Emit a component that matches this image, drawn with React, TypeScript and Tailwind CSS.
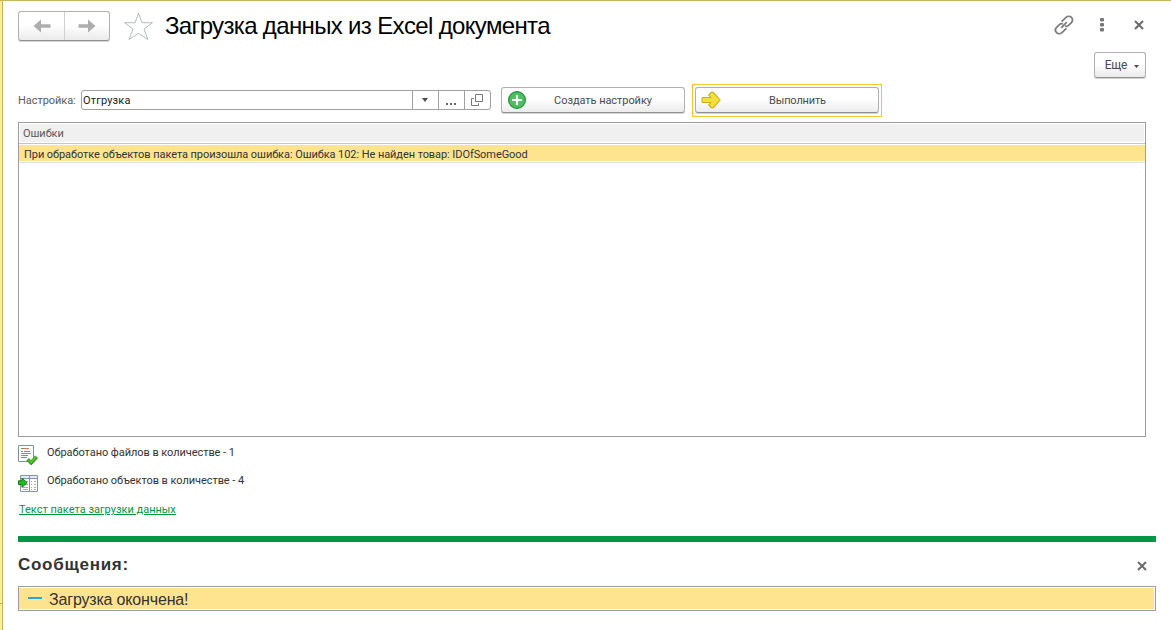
import React from "react";

function Cross() {
  return (
    <svg width="10" height="10" viewBox="0 0 10 10" className="block">
      <path d="M1 1L9 9M9 1L1 9" stroke="#6b6b6b" strokeWidth="2" fill="none" />
    </svg>
  );
}

function NavArrow({ right = false }: { right?: boolean }) {
  return (
    <svg width="18" height="14" viewBox="0 0 18 14" className={right ? "block -scale-x-100" : "block"}>
      <path d="M0.5 7L8 0.6V5.2H17.5V8.8H8V13.4Z" fill="#adadad" />
    </svg>
  );
}

const button =
  "flex items-center rounded-[3px] border border-[#b0b0b0] border-b-[#8f8f8f] bg-linear-to-b from-white from-45% to-[#ebebeb] shadow-[0_1px_0_#d4d4d4]";

function Header() {
  return (
    <header className="flex h-[41px] items-start pt-[10px] pr-[25px] pl-[15px]">
      <div className={`${button} h-[30px] w-[92px] shrink-0`}>
        <div className="flex h-full w-[46px] items-center justify-center border-r border-[#d0d0d0]">
          <NavArrow />
        </div>
        <div className="flex h-full flex-1 items-center justify-center">
          <NavArrow right />
        </div>
      </div>
      <svg width="30" height="29" viewBox="0 0 30 29" className="ml-[13px] mt-[1px] shrink-0">
        <path d="M15.5 1L18.9 10.7H29.5L21 17.1L24.9 27.5L15.5 21.4L6.1 27.5L10 17.1L1.5 10.7H12.1Z" fill="white" stroke="#b4bac0" strokeWidth="1" />
      </svg>
      <h1 className="ml-[12px] whitespace-nowrap text-[24px] leading-[30px] tracking-[-0.65px] text-black">Загрузка данных из Excel документа</h1>
      <div className="ml-auto flex h-[28px] items-center">
        <svg width="20" height="20" viewBox="0 0 20 20" className="mr-[26px] block" fill="none" stroke="#7d7d7d" strokeWidth="1.8">
          <path d="M7.6 6.6L12 2.4C13.6 1 16 1 17.4 2.4C18.9 3.9 18.9 6.1 17.4 7.6L14.6 10.4C13.6 11.3 12.2 11.5 11 11" />
          <path d="M12.4 13.4L8 17.6C6.4 19 4 19 2.6 17.6C1.1 16.1 1.1 13.9 2.6 12.4L5.4 9.6C6.4 8.7 7.8 8.5 9 9" />
          <path d="M7.2 12.8L12.8 7.2" />
        </svg>
        <svg width="4" height="14" viewBox="0 0 4 14" className="mr-[30px] block" fill="#777">
          <rect width="4" height="3.6" rx="1" />
          <rect y="5" width="4" height="3.6" rx="1" />
          <rect y="10" width="4" height="3.6" rx="1" />
        </svg>
        <div className="mr-[2px]"><Cross /></div>
      </div>
    </header>
  );
}

function SettingRow() {
  return (
    <div className="flex h-[33px] items-start pl-[15px]">
      <span className="mt-[9px] w-[63px] text-[11px] leading-[15px] whitespace-nowrap text-[#5a5a5a]">Настройка:</span>
      <div className="mt-[6px] flex h-[20px] w-[410px] rounded-[3px] border border-[#a0a0a0] bg-white">
        <div className="flex-1 pl-[1px] text-[11px] leading-[20px] tracking-[0.15px] text-[#222]">Отгрузка</div>
        <div className="flex w-[26px] items-center justify-center border-l border-[#a0a0a0] pr-px">
          <svg width="6" height="4" viewBox="0 0 6 4"><path d="M0 0H6L3 4Z" fill="#4a4a4a" /></svg>
        </div>
        <div className="flex w-[26px] items-center justify-center border-l border-[#a0a0a0] pt-[7px] pr-px">
          <svg width="10" height="2" viewBox="0 0 10 2" fill="#666"><path d="M0 0H2V2H0ZM4 0H6V2H4ZM8 0H10V2H8Z" /></svg>
        </div>
        <div className="flex w-[26px] items-center justify-center border-l border-[#a0a0a0] pr-px">
          <svg width="12" height="12" viewBox="0 0 12 12" fill="none" stroke="#777"><path d="M4.5 0.5H11.5V7.5H4.5ZM2.8 4.5H0.5V11.5H7.5V9.3" /></svg>
        </div>
      </div>
      <button className={`${button} mt-[3px] ml-[10px] h-[26px] w-[184px]`}>
        <svg width="18" height="18" viewBox="0 0 18 18" className="ml-[6px] shrink-0">
          <circle cx="9" cy="9" r="8.4" fill="#4fbd61" stroke="#259438" strokeWidth="1.2" />
          <path d="M9 4V14M4 9H14" stroke="white" strokeWidth="2.2" />
        </svg>
        <span className="flex-1 pt-[2px] pr-[4px] text-center text-[11px] text-[#4a4a4a]">Создать настройку</span>
      </button>
      <div className="ml-[7px] border border-[#f5c625] p-[2px] pb-[3px]">
        <button className={`${button} h-[26px] w-[184px]`}>
          <svg width="20" height="18" viewBox="0 0 20 18" className="ml-[5px] shrink-0">
            <path d="M1 7.2Q1 6.5 1.7 6.5H9.8L7.6 3.8L10.8 1L12.4 1.3L19.2 9L12.4 16.7L10.8 17L7.6 14.2L9.8 11.5H1.7Q1 11.5 1 10.8Z" fill="#f3df3a" stroke="#c9ae22" strokeWidth="1.1" strokeLinejoin="round" />
          </svg>
          <span className="flex-1 pt-[2px] pr-[4px] text-center text-[11px] tracking-[-0.15px] text-[#4a4a4a]">Выполнить</span>
        </button>
      </div>
    </div>
  );
}

function ErrorTable() {
  return (
    <div className="mt-[5px] mr-[25px] ml-[15px] flex h-[315px] flex-col border border-[#9c9c9c] bg-white text-[11px]">
      <div className="border-b border-[#c4c4c4] p-px">
        <div className="h-[18px] bg-[#f0f0f0] pl-[3px] leading-[20px] text-[#5a5a5a]">Ошибки</div>
      </div>
      <div className="border-b border-[#e0e0e0] py-px">
        <div className="h-[16px] bg-[#fee48f] pl-[5px] leading-[19px] tracking-[-0.07px] whitespace-nowrap text-[#333]">
          При обработке объектов пакета произошла ошибка: Ошибка 102: Не найден товар: IDOfSomeGood
        </div>
      </div>
    </div>
  );
}

function FilesIcon() {
  return (
    <svg width="20" height="20" viewBox="0 0 20 20" className="block shrink-0" fill="none">
      <path d="M0.5 0.5H15.5V16.5H0.5Z" fill="#fff" stroke="#7d919c" />
      <path d="M3 3.5H6M3 6.5H5M3 12.5H6" stroke="#58a058" />
      <path d="M6 3.5H11M8 8.5H13M3 8.5H5" stroke="#e0705a" />
      <path d="M6 6.5H12M5 8.5H8M3 10.5H10M6 12.5H9" stroke="#6d91a9" />
      <path d="M9.6 14.2L13.2 17.8L18.6 11.8" stroke="#2c8f16" strokeWidth="3.6" />
      <path d="M10 14.2L13.2 17.3L18.3 11.8" stroke="#57c233" strokeWidth="2" />
    </svg>
  );
}

function ObjectsIcon() {
  return (
    <svg width="20" height="17" viewBox="0 0 20 17" className="block shrink-0" fill="none">
      <path d="M2.5 0.5H19.5V16.5H2.5Z" fill="#fff" stroke="#8193b5" />
      <path d="M3 1H19V3H3Z" fill="#e6ebf3" />
      <path d="M3 3.5H19M11.5 1V16" stroke="#8193b5" />
      <path d="M5 6.5H10M5 9.5H10M5 12.5H10M13 6.5H14M13 9.5H14M13 12.5H14M16 6.5H18M16 9.5H18M16 12.5H18M5 14.5H10M13 14.5H14M16 14.5H18" stroke="#a9a9a9" />
      <path d="M0.5 5.8H4V3L9 7.7L4 12.4V9.6H0.5Z" fill="#20bd20" stroke="#147914" />
    </svg>
  );
}

function Results() {
  return (
    <div className="flex h-[99px] flex-col pl-[15px] text-[11px] text-[#333]">
      <div className="flex h-[28px] pt-[8px]">
        <FilesIcon />
        <span className="ml-[9px] leading-[15px]">Обработано файлов в количестве - 1</span>
      </div>
      <div className="flex h-[28px] pt-[8px]">
        <div className="pt-[2px]"><ObjectsIcon /></div>
        <span className="ml-[9px] leading-[15px]">Обработано объектов в количестве - 4</span>
      </div>
      <a className="mt-[9px] ml-px self-start leading-[15px] tracking-normal text-[#009646] underline underline-offset-1">Текст пакета загрузки данных</a>
    </div>
  );
}

function Messages() {
  return (
    <section className="mr-[15px] ml-[15px] border-t-[6px] border-[#009646]">
      <div className="flex h-[44px] items-center justify-between pr-[9px]">
        <h2 className="pt-[2px] text-[17px] leading-[20px] font-bold tracking-[0.72px] text-[#333]">Сообщения:</h2>
        <div className="pt-[4px]"><Cross /></div>
      </div>
      <div className="h-[25px] border border-[#9a9aa0] bg-white py-px pr-px">
        <div className="flex h-[21px] items-center bg-[#fee48f] pl-[9px]">
          <div className="mb-[2px] h-[2px] w-[14px] bg-[#22a8e0]" />
          <span className="ml-[7px] pt-[2px] text-[16px] leading-[21px] tracking-[-0.17px] text-[#333]">Загрузка окончена!</span>
        </div>
      </div>
    </section>
  );
}

export default function App() {
  return (
    <div className="flex h-[630px] w-[1171px] overflow-hidden border-t border-[#c8b560] bg-white font-['Liberation_Sans',Arial,sans-serif]">
      <aside className="flex w-[3px] shrink-0 flex-col border-r border-[#c3b15c] bg-[#fbeb9e]">
        <div className="h-[603px] border-b border-[#c8b560]" />
      </aside>
      <main className="min-w-0 flex-1">
        <Header />
        <div className="font-[Roboto,sans-serif] tracking-[-0.06px]">
          <div className="flex h-[42px] justify-end pt-[10px] pr-[25px]">
            <button className={`${button} h-[26px] w-[52px] justify-center gap-[7px] pl-[4px] text-[12px] tracking-[-0.3px] text-[#4a4a4a]`}>
              Еще
              <svg width="5" height="3" viewBox="0 0 5 3" className="mt-[2px]"><path d="M0 0H5L2.5 3Z" fill="#4a4a4a" /></svg>
            </button>
          </div>
          <SettingRow />
          <ErrorTable />
          <Results />
        </div>
        <Messages />
      </main>
    </div>
  );
}
